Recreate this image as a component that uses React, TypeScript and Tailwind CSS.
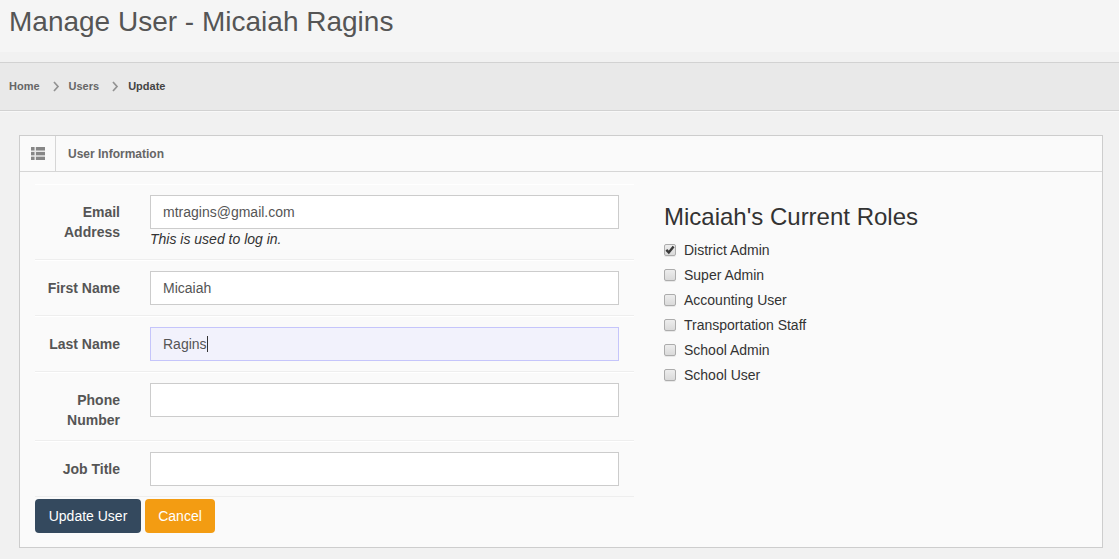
import { useEffect, useRef, useState } from "react";

type Field = {
  id: string;
  label: string;
  type: string;
  value: string;
  help?: string;
};

const fields: Field[] = [
  { id: "email", label: "Email Address", type: "text", value: "mtragins@gmail.com", help: "This is used to log in." },
  { id: "firstName", label: "First Name", type: "text", value: "Micaiah" },
  { id: "lastName", label: "Last Name", type: "text", value: "Ragins" },
  { id: "phone", label: "Phone Number", type: "tel", value: "" },
  { id: "jobTitle", label: "Job Title", type: "text", value: "" },
];

const roleNames = [
  "District Admin",
  "Super Admin",
  "Accounting User",
  "Transportation Staff",
  "School Admin",
  "School User",
];

function Chevron() {
  return (
    <svg className="h-[11px] w-[7px]" viewBox="0 0 7 11" fill="none" stroke="#929292" strokeWidth="1.7" aria-hidden="true">
      <path d="M1 1 L5 5.5 L1 10" />
    </svg>
  );
}

function ListIcon() {
  return (
    <svg className="h-[13px] w-[14px]" viewBox="0 0 14 13" aria-hidden="true">
      <rect x="0" y="0" width="14" height="13" fill="#e6e6e6" />
      <g fill="#868686">
        <rect x="0" y="0" width="3.5" height="3.5" rx="0.3" />
        <rect x="5" y="0" width="9" height="3.5" rx="0.3" />
        <rect x="0" y="5" width="3.5" height="3.2" rx="0.3" />
        <rect x="5" y="5" width="9" height="3.2" rx="0.3" />
        <rect x="0" y="9.7" width="3.5" height="3.3" rx="0.3" />
        <rect x="5" y="9.7" width="9" height="3.3" rx="0.3" />
      </g>
    </svg>
  );
}

function FieldRow({ field, active }: { field: Field; active: boolean }) {
  const ref = useRef<HTMLInputElement>(null);
  const [resting, setResting] = useState(active);

  useEffect(() => {
    if (active && ref.current) {
      ref.current.focus();
      ref.current.setSelectionRange(field.value.length, field.value.length);
    }
  }, [active, field.value]);

  return (
    <div className="flex border-t border-b border-t-white border-b-[#eeeeee] py-2.5">
      <label htmlFor={field.id} className="w-[85px] shrink-0 pt-[7px] text-right font-bold text-[#555555]">
        {field.label}
      </label>
      <div className="relative mr-[15px] ml-[30px] min-w-0 flex-1">
        <input
          ref={ref}
          id={field.id}
          type={field.type}
          defaultValue={field.value}
          onKeyDown={() => setResting(false)}
          onMouseDown={() => setResting(false)}
          onBlur={() => setResting(false)}
          className={`block h-[34px] w-full border border-[#cccccc] bg-white px-3 text-[#555555] outline-none focus:border-[#c5c5fb] focus:bg-[#f2f2fc] ${resting ? "caret-transparent" : "caret-[#333333]"}`}
        />
        {resting && (
          <span className="pointer-events-none absolute top-[9px] left-[57px] h-4 w-px bg-[#333333]" aria-hidden="true" />
        )}
        {field.help && <p className="italic text-[#333333]">{field.help}</p>}
      </div>
    </div>
  );
}

function RoleOption({ name, initial }: { name: string; initial: boolean }) {
  const [checked, setChecked] = useState(initial);
  return (
    <label className="flex h-5 items-center gap-2">
      <span className="grid">
        <input
          type="checkbox"
          checked={checked}
          onChange={() => setChecked(!checked)}
          className="col-start-1 row-start-1 size-3 appearance-none rounded-[2px] border border-[#acacac] bg-linear-to-b from-[#ededed] to-[#dadada] shadow-[0_1px_0_#e8e8e8]"
        />
        {checked && (
          <svg className="pointer-events-none col-start-1 row-start-1 size-3" viewBox="0 0 12 12" fill="none" stroke="#3a3a3a" strokeWidth="2.4" aria-hidden="true">
            <path d="M2.3 5.8 L4.8 8.4 L9.6 2.4" />
          </svg>
        )}
      </span>
      {name}
    </label>
  );
}

export default function App() {
  return (
    <div className="min-h-screen bg-[#f1f1f1] pb-[11px] font-['Liberation_Sans',Arial,sans-serif] text-sm leading-5 text-[#333333]">
      <header className="bg-[#f5f5f5] px-[9px] pt-1 pb-3">
        <h1 className="text-[28px] leading-9 text-[#555555]">Manage User - Micaiah Ragins</h1>
      </header>

      <nav
        aria-label="Breadcrumb"
        className="mt-2.5 flex h-[49px] items-center border-t border-b border-[#d2d2d2] bg-[#e9e9e9] px-[9px] pb-px text-[11px] font-bold text-[#666666] shadow-[0_1px_0_#f8f8f8]"
      >
        <a href="#home" className="mr-[13px]">Home</a>
        <Chevron />
        <a href="#users" className="mr-[13px] ml-[9px]">Users</a>
        <Chevron />
        <a href="#update" aria-current="page" className="ml-[9px] text-[#444444]">Update</a>
      </nav>

      <section className="mt-6 mr-4 ml-[19px] border border-[#cdcdcd] bg-[#fafafa]">
        <div className="flex h-9 items-stretch border-b border-[#d6d6d6]">
          <span className="flex w-9 items-center justify-center border-r border-[#d6d6d6]">
            <ListIcon />
          </span>
          <h2 className="self-center pl-3 text-xs font-bold text-[#666666]">User Information</h2>
        </div>

        <div className="grid grid-cols-[minmax(0,599fr)_minmax(0,453fr)] px-[15px] pt-3 pb-3.5">
          <form onSubmit={(e) => e.preventDefault()}>
            {fields.map((field) => (
              <FieldRow key={field.id} field={field} active={field.id === "lastName"} />
            ))}
            <div className="mt-0.5 flex gap-1">
              <button type="submit" className="h-[34px] min-w-[106px] rounded bg-[#34495e] px-3 text-white">
                Update User
              </button>
              <button type="button" className="h-[34px] min-w-[70px] rounded bg-[#f39c12] px-3 text-white">
                Cancel
              </button>
            </div>
          </form>

          <fieldset className="pl-[30px]">
            <legend className="pt-[19px] text-2xl leading-7">Micaiah's Current Roles</legend>
            <div className="mt-[9px] flex flex-col gap-[5px]">
              {roleNames.map((name, i) => (
                <RoleOption key={name} name={name} initial={i === 0} />
              ))}
            </div>
          </fieldset>
        </div>
      </section>
    </div>
  );
}
